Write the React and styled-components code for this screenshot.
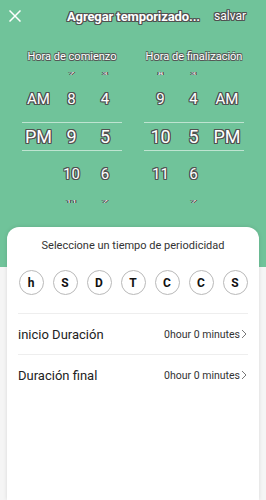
import React from "react";
import styled, { createGlobalStyle } from "styled-components";

const GlobalStyle = createGlobalStyle`
  html, body {
    margin: 0;
    padding: 0;
  }
  body {
    width: 266px;
    height: 500px;
    overflow: hidden;
    font-family: Roboto, "Noto Sans", "Liberation Sans", sans-serif;
    background: linear-gradient(#70c39a 0, #70c39a 267px, #f5f5f5 267px);
  }
`;

const outline = `
  color: #fff;
  text-shadow: -1px -1px 0 #505050, 1px -1px 0 #505050, -1px 1px 0 #505050,
    1px 1px 0 #505050, 0 1px 0 #505050, 0 -1px 0 #505050, 1px 0 0 #505050,
    -1px 0 0 #505050;
`;

const Screen = styled.div`
  display: flex;
  flex-direction: column;
  height: 500px;
`;

const TopBar = styled.div`
  display: flex;
  align-items: center;
  height: 32px;
  padding: 0 20px 0 9px;
`;

const CloseButton = styled.span`
  display: flex;
  width: 12px;
  height: 12px;
  > svg {
    width: 12px;
    height: 12px;
  }
`;

const Title = styled.div`
  flex: 1;
  text-align: right;
  margin-right: 14px;
  font-size: 13px;
  font-weight: 700;
  letter-spacing: -0.1px;
  ${outline}
`;

const SaveLink = styled.div`
  font-size: 12px;
  ${outline}
`;

const Pickers = styled.div`
  display: flex;
  gap: 22px;
  padding: 18px 0 0 22px;
`;

const Picker = styled.div`
  width: 100px;
  display: flex;
  flex-direction: column;
`;

const PickerLabel = styled.div`
  text-align: center;
  font-size: 11px;
  height: 14px;
  line-height: 14px;
  color: #fff;
  text-shadow: -0.7px -0.7px 0 #555, 0.7px -0.7px 0 #555, -0.7px 0.7px 0 #555, 0.7px 0.7px 0 #555;
`;

const WheelRow = styled.div`
  display: grid;
  grid-template-columns: 33px 33px 34px;
  align-items: center;
  justify-items: center;
  height: ${p => p.$h}px;
  font-size: ${p => p.$size}px;
  ${outline}
  ${p =>
    p.$selected &&
    `
    margin: 6px 0;
    border-top: 1px solid rgba(255,255,255,0.55);
    border-bottom: 1px solid rgba(255,255,255,0.55);
  `}
  > span {
    display: inline-block;
    transform: scaleY(${p => p.$squash || 1});
  }
`;

const Card = styled.div`
  margin: 0 7px;
  margin-top: auto;
  height: 273px;
  background: #fff;
  border-radius: 12px 12px 0 0;
  box-shadow: 0 0 4px rgba(0, 0, 0, 0.12);
  padding: 0 11px;
  display: flex;
  flex-direction: column;
`;

const CardTitle = styled.div`
  text-align: center;
  font-size: 11px;
  color: #333;
  margin-top: 12px;
  line-height: 14px;
`;

const DayRow = styled.div`
  display: flex;
  justify-content: space-between;
  padding: 0 0.5px;
  margin-top: 17px;
  padding-bottom: 18px;
  border-bottom: 1px solid #eee;
`;

const Day = styled.div`
  width: 23px;
  height: 23px;
  border: 1px solid #b9b9b9;
  border-radius: 50%;
  display: flex;
  align-items: center;
  justify-content: center;
  font-size: 12px;
  font-weight: 700;
  color: #111;
`;

const SettingRow = styled.div`
  display: flex;
  align-items: center;
  height: 40px;
  border-bottom: ${p => (p.$last ? "none" : "1px solid #eee")};
`;

const SettingLabel = styled.div`
  flex: 1;
  font-size: 13px;
  color: #222;
`;

const SettingValue = styled.div`
  display: flex;
  align-items: center;
  gap: 1px;
  font-size: 10.5px;
  color: #333;
  padding-right: 1px;
  > svg {
    width: 6px;
    height: 10px;
  }
`;

const Chevron = () => (
  <svg viewBox="0 0 6 10" fill="none" stroke="#777" strokeWidth="1">
    <path d="M1 1l4 4-4 4" />
  </svg>
);

const rows = (cols) => [
  { h: 18, size: 10, squash: 0.4, v: cols[0] },
  { h: 34, size: 15, v: cols[1] },
  { h: 27, size: 18, selected: true, v: cols[2] },
  { h: 34, size: 15, v: cols[3] },
  { h: 20, size: 10, squash: 0.4, v: cols[4] },
];

const startCols = [
  ["", "7", "3"],
  ["AM", "8", "4"],
  ["PM", "9", "5"],
  ["", "10", "6"],
  ["", "11", "7"],
];

const endCols = [
  ["8", "3", ""],
  ["9", "4", "AM"],
  ["10", "5", "PM"],
  ["11", "6", ""],
  ["", "7", ""],
];

const Wheel = ({ label, data }) => (
  <Picker>
    <PickerLabel>{label}</PickerLabel>
    {rows(data).map((r, i) => (
      <WheelRow key={i} $h={r.h} $size={r.size} $squash={r.squash} $selected={r.selected}>
        {r.v.map((t, j) => (
          <span key={j}>{t}</span>
        ))}
      </WheelRow>
    ))}
  </Picker>
);

const days = ["h", "S", "D", "T", "C", "C", "S"];

export default function App() {
  return (
    <>
      <GlobalStyle />
      <Screen>
        <TopBar>
          <CloseButton>
            <svg viewBox="0 0 12 12" fill="none" stroke="#fff" strokeWidth="1.5">
              <path d="M0.5 0.5l11 11M11.5 0.5l-11 11" />
            </svg>
          </CloseButton>
          <Title>Agregar temporizado...</Title>
          <SaveLink>salvar</SaveLink>
        </TopBar>
        <Pickers>
          <Wheel label="Hora de comienzo" data={startCols} />
          <Wheel label="Hora de finalización" data={endCols} />
        </Pickers>
        <Card>
          <CardTitle>Seleccione un tiempo de periodicidad</CardTitle>
          <DayRow>
            {days.map((d, i) => (
              <Day key={i}>{d}</Day>
            ))}
          </DayRow>
          <SettingRow>
            <SettingLabel>inicio Duración</SettingLabel>
            <SettingValue>
              0hour 0 minutes
              <Chevron />
            </SettingValue>
          </SettingRow>
          <SettingRow $last>
            <SettingLabel>Duración final</SettingLabel>
            <SettingValue>
              0hour 0 minutes
              <Chevron />
            </SettingValue>
          </SettingRow>
        </Card>
      </Screen>
    </>
  );
}
